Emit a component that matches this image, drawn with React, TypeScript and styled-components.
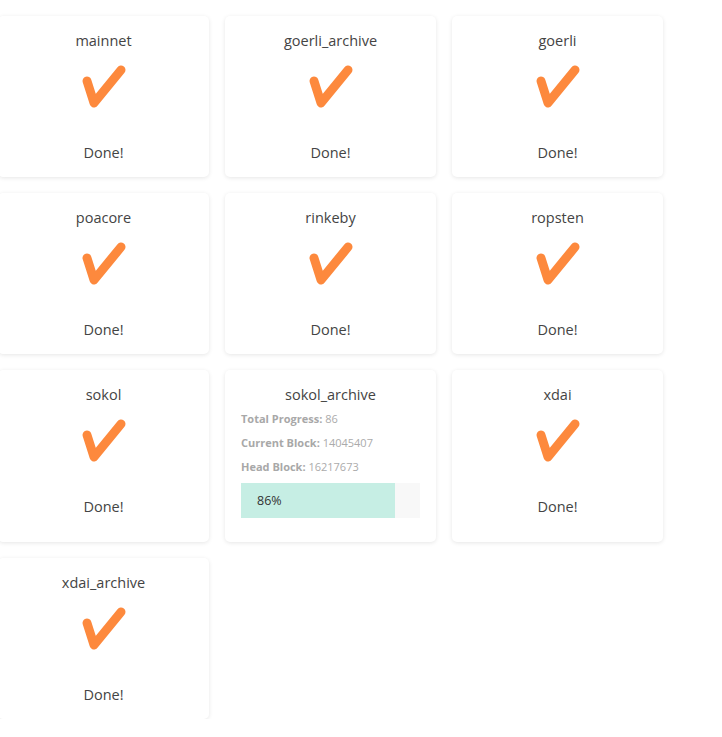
import React from "react";
import styled, { createGlobalStyle } from "styled-components";

const Global = createGlobalStyle`
  html, body { margin: 0; padding: 0; background: #ffffff; }
  body { font-family: "Open Sans", "Noto Sans", sans-serif; }
`;

const Grid = styled.div`
  display: grid;
  grid-template-columns: repeat(3, 211px);
  gap: 16px;
  margin: 16px 0 0 -2px;
`;

const Card = styled.div`
  background: #fff;
  border-radius: 5px;
  box-shadow: 0 1px 4px rgba(0, 0, 0, 0.1);
  padding: 15px 16px 14px;
  display: flex;
  flex-direction: column;
  align-items: stretch;
  color: #4a4a4a;
`;

const Title = styled.div`
  font-size: 14.5px;
  line-height: 20px;
  text-align: center;
  color: #444;
`;

const CheckBox = styled.div`
  display: flex;
  justify-content: center;
  margin-top: 11px;
  height: 50px;
`;

const Done = styled.div`
  font-size: 14.5px;
  line-height: 20px;
  text-align: center;
  margin-top: 31px;
  color: #444;
`;

const Info = styled.div`
  margin-top: 2px;
`;

const InfoLine = styled.div`
  font-size: 11px;
  line-height: 24px;
  color: #ababab;
  b { font-weight: 700; color: #a8a8a8; }
`;

const Bar = styled.div`
  margin: 4px 0 10px;
  height: 35px;
  background: #f8f8f8;
`;

const Fill = styled.div`
  height: 100%;
  background: #c6eee4;
  display: flex;
  align-items: center;
  padding-left: 16px;
  box-sizing: border-box;
  font-size: 12.5px;
  color: #333;
`;

const Check = () => (
  <svg width="50" height="50" viewBox="0 0 50 50">
    <path
      d="M8 19 L15 41 L42 8"
      fill="none"
      stroke="#fd893d"
      strokeWidth="9"
      strokeLinecap="round"
      strokeLinejoin="round"
    />
  </svg>
);

type Net = { name: string; progress?: { total: number; current: number; head: number } };

const nets: Net[] = [
  { name: "mainnet" },
  { name: "goerli_archive" },
  { name: "goerli" },
  { name: "poacore" },
  { name: "rinkeby" },
  { name: "ropsten" },
  { name: "sokol" },
  { name: "sokol_archive", progress: { total: 86, current: 14045407, head: 16217673 } },
  { name: "xdai" },
  { name: "xdai_archive" },
];

export default function App() {
  return (
    <>
      <Global />
      <Grid>
        {nets.map((n) => (
          <Card key={n.name}>
            <Title>{n.name}</Title>
            {n.progress ? (
              <Info>
                <InfoLine>
                  <b>Total Progress:</b> {n.progress.total}
                </InfoLine>
                <InfoLine>
                  <b>Current Block:</b> {n.progress.current}
                </InfoLine>
                <InfoLine>
                  <b>Head Block:</b> {n.progress.head}
                </InfoLine>
                <Bar>
                  <Fill style={{ width: `${n.progress.total}%` }}>{n.progress.total}%</Fill>
                </Bar>
              </Info>
            ) : (
              <>
                <CheckBox>
                  <Check />
                </CheckBox>
                <Done>Done!</Done>
              </>
            )}
          </Card>
        ))}
      </Grid>
    </>
  );
}
